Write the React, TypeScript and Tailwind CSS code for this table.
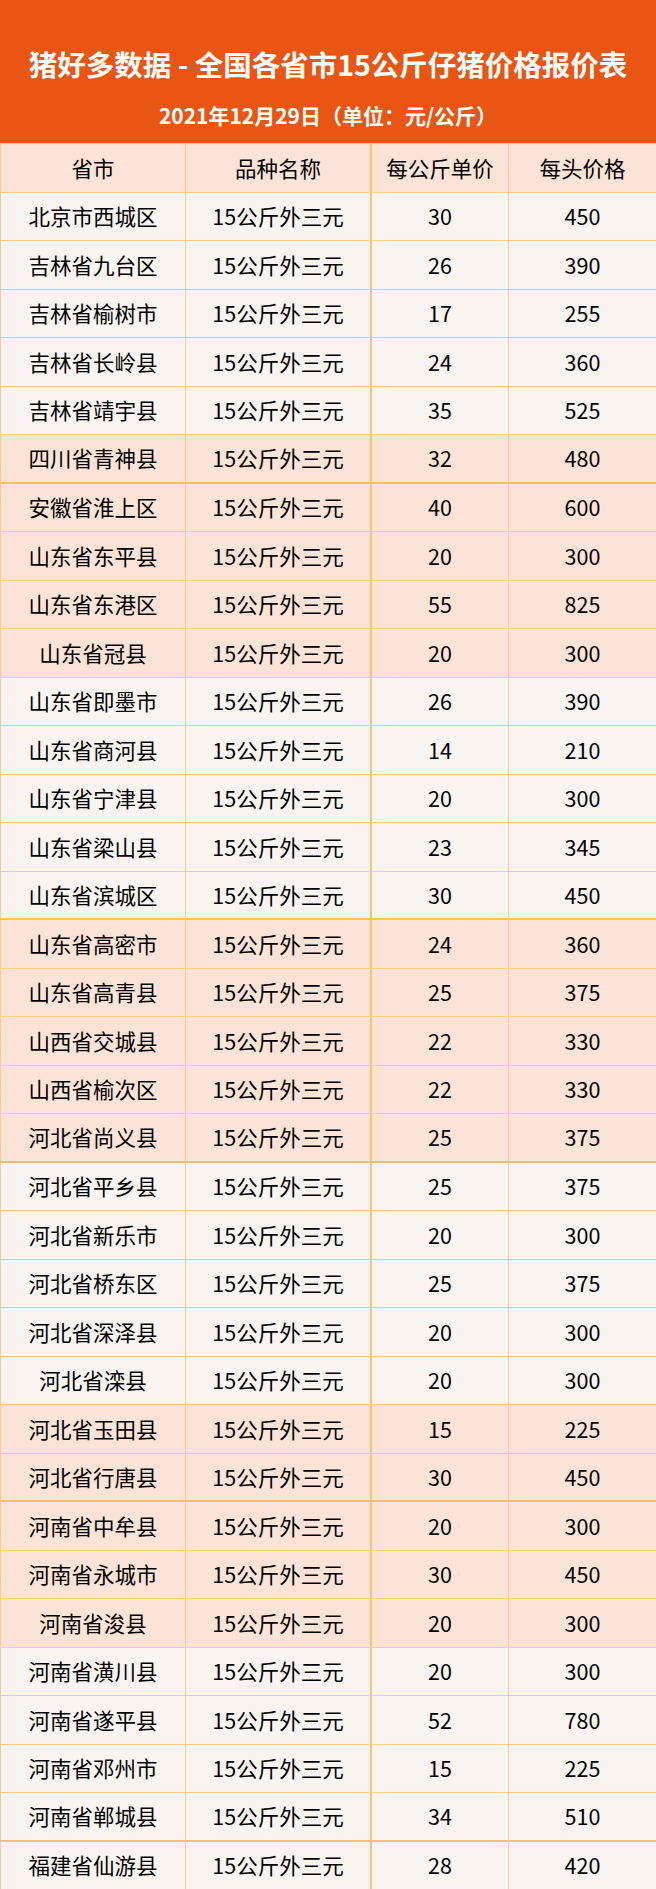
const rows: [string, number, number][] = [
  ["北京市西城区", 30, 450],
  ["吉林省九台区", 26, 390],
  ["吉林省榆树市", 17, 255],
  ["吉林省长岭县", 24, 360],
  ["吉林省靖宇县", 35, 525],
  ["四川省青神县", 32, 480],
  ["安徽省淮上区", 40, 600],
  ["山东省东平县", 20, 300],
  ["山东省东港区", 55, 825],
  ["山东省冠县", 20, 300],
  ["山东省即墨市", 26, 390],
  ["山东省商河县", 14, 210],
  ["山东省宁津县", 20, 300],
  ["山东省梁山县", 23, 345],
  ["山东省滨城区", 30, 450],
  ["山东省高密市", 24, 360],
  ["山东省高青县", 25, 375],
  ["山西省交城县", 22, 330],
  ["山西省榆次区", 22, 330],
  ["河北省尚义县", 25, 375],
  ["河北省平乡县", 25, 375],
  ["河北省新乐市", 20, 300],
  ["河北省桥东区", 25, 375],
  ["河北省深泽县", 20, 300],
  ["河北省滦县", 20, 300],
  ["河北省玉田县", 15, 225],
  ["河北省行唐县", 30, 450],
  ["河南省中牟县", 20, 300],
  ["河南省永城市", 30, 450],
  ["河南省浚县", 20, 300],
  ["河南省潢川县", 20, 300],
  ["河南省遂平县", 52, 780],
  ["河南省邓州市", 15, 225],
  ["河南省郸城县", 34, 510],
  ["福建省仙游县", 28, 420],
];

// rows after which the horizontal rule is heavier
const thick = new Set([5, 14, 19, 26, 33]);

function Row({ cells, peach, heavy }: { cells: (string | number)[]; peach: boolean; heavy: boolean }) {
  const bg = peach ? "bg-[#fbe4d7]" : "bg-[#faf4f0]";
  const bb = heavy ? "border-b-2 border-b-[#f6c06a]" : "border-b border-b-[#f9cd8c]";
  return (
    <div className={`flex h-[48.5px] ${bg} ${bb}`}>
      <div className="w-[186px] flex items-center justify-center border-l border-r border-[#f9cd8c]">{cells[0]}</div>
      <div className="w-[186px] flex items-center justify-center border-r-2 border-[#f7c673]">{cells[1]}</div>
      <div className="w-[137px] flex items-center justify-center border-r border-[#f9cd8c]">{cells[2]}</div>
      <div className="flex-1 flex items-center justify-center">{cells[3]}</div>
    </div>
  );
}

export default function App() {
  return (
    <div className="w-[656px] h-[1889px] overflow-hidden text-black text-[21.5px] font-['Noto_Sans_CJK_SC',sans-serif]">
      <div className="h-[143px] bg-[#e95513] flex flex-col items-center pt-[46px] text-white font-bold">
        <div className="text-[28.5px] leading-[36px]">猪好多数据 - 全国各省市15公斤仔猪价格报价表</div>
        <div className="text-[21px] leading-[28px] mt-[19px]">2021年12月29日（单位：元/公斤）</div>
      </div>
      <div className="border-t border-[#f7c673]">
        <Row cells={["省市", "品种名称", "每公斤单价", "每头价格"]} peach heavy={false} />
        {rows.map((r, i) => (
          <Row
            key={i}
            cells={[r[0], "15公斤外三元", r[1], r[2]]}
            peach={Math.floor(i / 5) % 2 === 1}
            heavy={thick.has(i)}
          />
        ))}
      </div>
    </div>
  );
}
